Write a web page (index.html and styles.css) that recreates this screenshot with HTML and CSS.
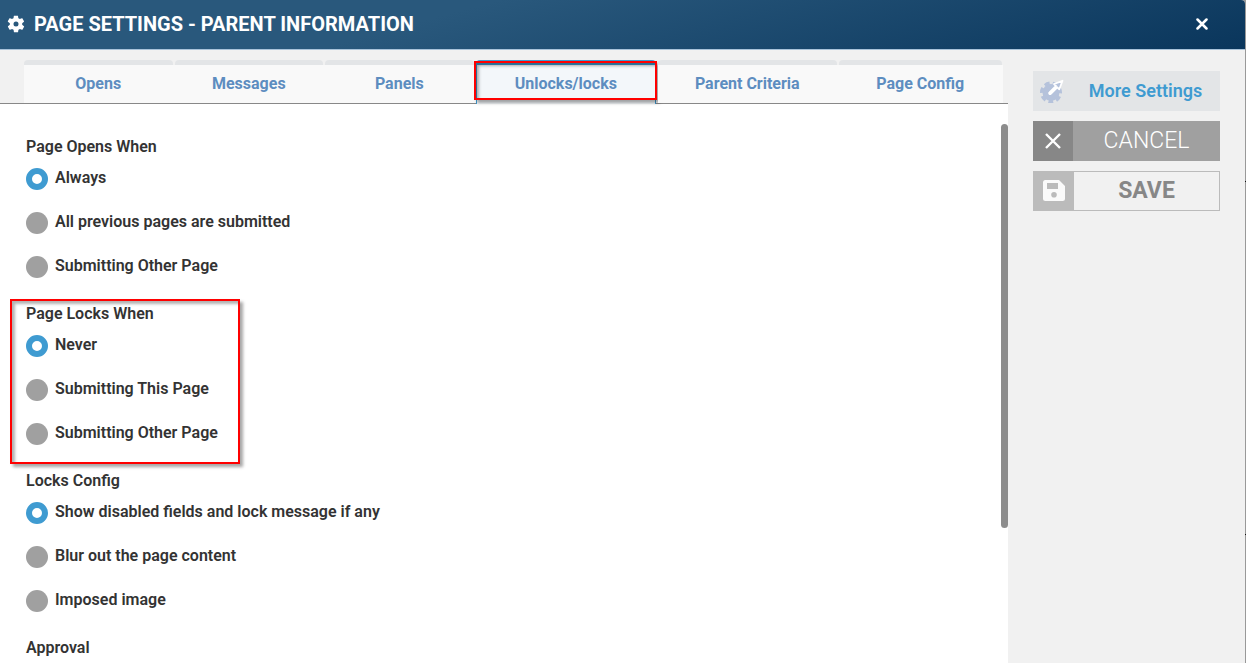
FILE: index.html
```html
<!DOCTYPE html>
<html lang="en">

<head>
  <meta charset="UTF-8" />
  <meta name="viewport" content="width=device-width, initial-scale=1.0" />
  <title>Page Settings - Parent Information</title>
  <link rel="stylesheet" href="styles.css">
</head>

<body>
  <div class="dialog">
    <header class="dialog-header">
      <svg class="gear" viewBox="0 0 24 24" width="20" height="20" aria-hidden="true">
        <path fill="#fff" fill-rule="evenodd" d="M19.4 13a7.500 7.500 0 0 0 0-2l2.100-1.700c.2-.2.3-.4.1-.7l-2-3.400c-.1-.2-.4-.3-.6-.2l-2.500 1a7.300 7.300 0 0 0-1.700-1l-.4-2.600c0-.3-.2-.4-.5-.4h-4c-.2 0-.4.1-.5.400l-.4 2.600a7.700 7.700 0 0 0-1.700 1l-2.500-1c-.2-.1-.5 0-.6.200l-2 3.400c-.1.300 0 .5.100.7L4.600 11a7.900 7.900 0 0 0 0 2l-2.200 1.700c-.1.200-.2.400-.1.700l2 3.400c.1.200.4.300.6.200l2.500-1a7.300 7.300 0 0 0 1.700 1l.4 2.600c.1.300.3.400.5.400h4c.3 0 .5-.1.500-.4l.4-2.600a7.700 7.700 0 0 0 1.700-1l2.500 1c.2.100.5 0 .6-.2l2-3.400c.2-.3.100-.5-.1-.7zM12 15a3 3 0 1 1 0-6 3 3 0 0 1 0 6z" />
      </svg>
      <h1>PAGE SETTINGS - PARENT INFORMATION</h1>
      <button type="button" class="close" aria-label="Close">
        <svg viewBox="0 0 12 12" width="12" height="12"><path d="M1.500 1.500l9 9M10.500 1.500l-9 9" stroke="#fff" stroke-width="2.500" stroke-linecap="round" /></svg>
      </button>
    </header>

    <div class="dialog-body">
      <main class="content">
        <nav class="tabs">
          <button type="button" class="tab">Opens</button>
          <button type="button" class="tab">Messages</button>
          <button type="button" class="tab">Panels</button>
          <button type="button" class="tab tab-wide tab-active">Unlocks/locks<span class="marker"></span></button>
          <button type="button" class="tab tab-wide">Parent Criteria</button>
          <button type="button" class="tab tab-mid">Page Config</button>
        </nav>

        <div class="panel">
          <form class="options">
            <fieldset class="group">
              <legend>Page Opens When</legend>
              <label><input type="radio" name="opens" checked /><span>Always</span></label>
              <label><input type="radio" name="opens" /><span>All previous pages are submitted</span></label>
              <label><input type="radio" name="opens" /><span>Submitting Other Page</span></label>
            </fieldset>
            <fieldset class="group">
              <legend>Page Locks When</legend>
              <label><input type="radio" name="locks" checked /><span>Never</span></label>
              <label><input type="radio" name="locks" /><span>Submitting This Page</span></label>
              <label><input type="radio" name="locks" /><span>Submitting Other Page</span></label>
              <span class="marker marker-group"></span>
            </fieldset>
            <fieldset class="group">
              <legend>Locks Config</legend>
              <label><input type="radio" name="config" checked /><span>Show disabled fields and lock message if any</span></label>
              <label><input type="radio" name="config" /><span>Blur out the page content</span></label>
              <label><input type="radio" name="config" /><span>Imposed image</span></label>
            </fieldset>
            <fieldset class="group">
              <legend>Approval</legend>
            </fieldset>
          </form>
          <div class="scrollbar">
            <div class="thumb"></div>
          </div>
        </div>
      </main>

      <aside class="actions">
        <button type="button" class="action action-more">
          <span class="action-icon">
            <svg viewBox="0 0 24 24" width="24" height="24">
              <circle cx="11" cy="13.500" r="8.500" fill="#b5c2db" />
              <circle cx="11" cy="13.500" r="9" stroke="#b5c2db" stroke-width="4" stroke-dasharray="5 3.080" stroke-dashoffset="2.500" transform="rotate(90 11 13.500)" />
              <path fill="#b5c2db" stroke="#fff" stroke-width="1.800" stroke-linejoin="round" d="M9.500 13.500l6.500-6.500-2-2L22.500 1.800l-3.200 8.500-2-2-6.500 6.500q-.8.600-1.400 0-.6-.7.100-1.300z" />
            </svg>
          </span>
          <span class="action-text">More Settings</span>
        </button>
        <button type="button" class="action action-cancel">
          <span class="action-icon">
            <svg viewBox="0 0 16 16" width="16" height="16"><path d="M1 1l14 14M15 1L1 15" stroke="#fff" stroke-width="2.400" /></svg>
          </span>
          <span class="action-text">CANCEL</span>
        </button>
        <button type="button" class="action action-save">
          <span class="action-icon">
            <svg viewBox="0 0 22 22" width="22" height="22"><path fill="#fafafa" fill-rule="evenodd" d="M3 0h13l6 6v12.500a2.500 2.500 0 0 1-2.500 2.500h-17A2.500 2.500 0 0 1 0 18.500v-16A2.500 2.500 0 0 1 3 0zM4 3v6h11V3zM11 12a2.800 2.800 0 1 0 0 5.600 2.800 2.800 0 0 0 0-5.600z" /></svg>
          </span>
          <span class="action-text">SAVE</span>
        </button>
      </aside>
    </div>
  </div>
</body>

</html>
```
FILE: styles.css
```css
* {
  box-sizing: border-box;
}
body {
  margin: 0;
  font-family: Roboto, 'Liberation Sans', sans-serif;
  font-size: 16px;
  color: #333;
  background: linear-gradient(#111, #111) 100% 181px / 1px 1px no-repeat,
    linear-gradient(#111, #111) 100% 534px / 1px 1px no-repeat, #999;
}
button {
  font-family: inherit;
  border: none;
  padding: 0;
  cursor: pointer;
}
svg {
  display: block;
  fill: none;
}
.dialog {
  display: flex;
  flex-direction: column;
  height: 100vh;
  margin-right: 1px;
  overflow: hidden;
  border-top-right-radius: 4px;
  background: #f1f1f1;
}
.dialog-header {
  display: flex;
  align-items: center;
  gap: 8px;
  height: 50px;
  flex: none;
  padding: 0 37px 2px 6px;
  border-bottom: 1px solid #a9c3da;
  background: linear-gradient(165deg, #29587c 35%, #0a365c);
}
h1 {
  flex: 1;
  margin: 0;
  font-size: 20px;
  font-weight: 700;
  color: #fff;
}
.close {
  background: none;
}
.dialog-body {
  display: flex;
  flex: 1;
  min-height: 0;
}
.content {
  display: flex;
  flex-direction: column;
  flex: 1;
  min-width: 0;
}

/* tabs */
.tabs {
  display: flex;
  flex: none;
  gap: 2px;
  height: 54px;
  padding: 10px 6px 0 24px;
  border-bottom: 1px solid #888;
  background: linear-gradient(#f9f9f9, #f9f9f9) 24px 15px / calc(100% - 29px) 100% no-repeat;
}
.tab {
  position: relative;
  flex: 149 1 0;
  padding-bottom: 2px;
  border-top: 5px solid #e3e5e7;
  border-radius: 4px 4px 0 0;
  background: #f9f9f9;
  color: #5d8dc0;
  font-size: 16px;
  font-weight: 700;
}
.tab-wide {
  flex-grow: 179;
}
.tab-mid {
  flex-grow: 164;
}
.tab-active {
  margin-bottom: -1px;
  border-top-color: #3f9bd1;
  border-left: 1px solid #3f9bd1;
  border-right: 1px solid #3f9bd1;
  background: #f3f7fa;
}

/* red highlight boxes */
.marker {
  position: absolute;
  top: -4px;
  right: -2px;
  bottom: 4px;
  left: -3px;
  border: 2px solid #f00;
  box-shadow: 3px 3px 3px rgba(0, 0, 0, 0.35), inset 3px 3px 3px rgba(0, 0, 0, 0.3);
  pointer-events: none;
}
.marker-group {
  top: -25px;
  right: auto;
  bottom: -8px;
  left: -16px;
  width: 230px;
}

/* options */
.panel {
  display: flex;
  flex: 1;
  min-height: 0;
  background: #fff;
}
.options {
  flex: 1;
  overflow: hidden;
  padding: 33px 26px 0;
}
.group {
  position: relative;
  margin: 0 0 15px;
  padding: 0;
  border: none;
  font-weight: 600;
}
.group legend {
  padding: 0;
  line-height: 20px;
}
.group label {
  display: flex;
  align-items: center;
  gap: 7px;
  height: 44px;
}
.group label span {
  padding-bottom: 4px;
}
.group input {
  appearance: none;
  width: 22px;
  height: 22px;
  margin: 0;
  border-radius: 50%;
  background: #a0a0a0;
}
.group input:checked {
  border: 6px solid #3f9bd1;
  background: #fff;
}
.scrollbar {
  width: 7px;
  padding-top: 20px;
}
.thumb {
  height: 75%;
  border-radius: 4px;
  background: #8c8c8c;
}

/* side buttons */
.actions {
  display: flex;
  flex-direction: column;
  gap: 10px;
  width: 237px;
  flex: none;
  padding: 21px 25px;
}
.action {
  display: flex;
  height: 40px;
}
.action-icon {
  display: flex;
  align-items: center;
  justify-content: center;
  width: 40px;
  height: 100%;
}
.action-text {
  flex: 1;
  align-self: center;
  padding-bottom: 2px;
}
.action-more {
  background: #e3e5e7;
  color: #3f9bd1;
  font-size: 18px;
  font-weight: 600;
}
.action-more .action-icon {
  width: 38px;
}
.action-cancel {
  background: #a0a0a0;
  color: #fff;
  font-size: 23px;
  font-weight: 300;
}
.action-cancel .action-icon {
  background: #878787;
}
.action-save {
  border: 1px solid #bbb;
  background: #f1f1f1;
  color: #878787;
  font-size: 23px;
  font-weight: 700;
}
.action-save .action-icon {
  background: #bbb;
}
```
